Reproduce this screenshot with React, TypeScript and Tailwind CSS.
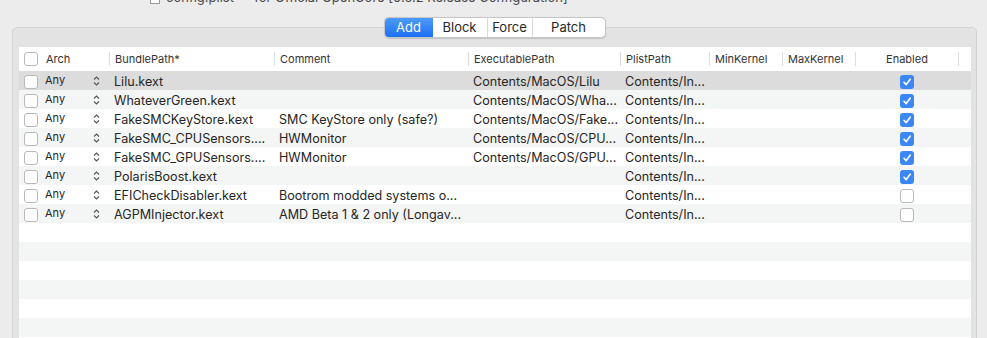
import { Fragment } from "react";

type Kext = {
  bundle: string;
  comment: string;
  exec: string;
  plist: string;
  enabled: boolean;
};

const kexts: Kext[] = [
  { bundle: "Lilu.kext", comment: "", exec: "Contents/MacOS/Lilu", plist: "Contents/In...", enabled: true },
  { bundle: "WhateverGreen.kext", comment: "", exec: "Contents/MacOS/Wha...", plist: "Contents/In...", enabled: true },
  { bundle: "FakeSMCKeyStore.kext", comment: "SMC KeyStore only (safe?)", exec: "Contents/MacOS/Fake...", plist: "Contents/In...", enabled: true },
  { bundle: "FakeSMC_CPUSensors....", comment: "HWMonitor", exec: "Contents/MacOS/CPU...", plist: "Contents/In...", enabled: true },
  { bundle: "FakeSMC_GPUSensors....", comment: "HWMonitor", exec: "Contents/MacOS/GPU...", plist: "Contents/In...", enabled: true },
  { bundle: "PolarisBoost.kext", comment: "", exec: "", plist: "Contents/In...", enabled: true },
  { bundle: "EFICheckDisabler.kext", comment: "Bootrom modded systems o...", exec: "", plist: "Contents/In...", enabled: false },
  { bundle: "AGPMInjector.kext", comment: "AMD Beta 1 & 2 only (Longav...", exec: "", plist: "Contents/In...", enabled: false },
];

const font = { fontFamily: "Inter, 'Liberation Sans', sans-serif" };

function Box({ checked }: { checked?: boolean }) {
  if (checked) {
    return (
      <span className="flex h-[14px] w-[14px] items-center justify-center rounded-[3px] bg-[#3b87f5]">
        <svg width="10" height="10" viewBox="0 0 10 10">
          <path d="M2 5.3 L4.2 7.6 L8.2 2.2" fill="none" stroke="white" strokeWidth="1.6" strokeLinecap="round" strokeLinejoin="round" />
        </svg>
      </span>
    );
  }
  return <span className="block h-[14px] w-[14px] rounded-[3px] border border-[#b9b9b9] bg-white" />;
}

function Stepper() {
  return (
    <svg width="7" height="10" viewBox="0 0 7 10" className="text-[#555]">
      <path d="M1 3.5 L3.5 1 L6 3.5 M1 6.5 L3.5 9 L6 6.5" fill="none" stroke="currentColor" strokeWidth="1.1" />
    </svg>
  );
}

const cols = "grid grid-cols-[90px_165px_194px_152px_89px_73px_73px_104px_1fr]";
const cell = "overflow-hidden whitespace-nowrap pl-[5px] pt-[3px]";

export default function App() {
  const rows = Array.from({ length: 15 }, (_, i) => kexts[i]);

  return (
    <div className="h-[338px] w-[987px] overflow-hidden bg-[#ececec] text-[#262626]" style={font}>
      <div className="-mt-[9px] flex h-[14px] items-center gap-[6px] pl-[150px] text-[13px] text-[#4a4a4a]">
        <span className="block h-[12px] w-[10px] border border-[#9a9a9a] bg-white" />
        <span className="whitespace-nowrap">config.plist — for Official OpenCore [0.6.2 Release Configuration]</span>
      </div>

      <div className="ml-[12px] mt-[22px] flex h-[400px] w-[965px] flex-col rounded-[5px] border border-[#d3d3d3] bg-[#e3e3e3]">
        <div className="-mt-[11px] flex h-[21px] self-center overflow-hidden rounded-[5px] border border-[#c6c6c6] bg-white text-[13px] shadow-[0_0.5px_1px_rgba(0,0,0,0.15)]">
          <span className="flex w-[48px] items-center justify-center bg-gradient-to-b from-[#4c9bf8] to-[#1b6ff0] text-white">Add</span>
          <span className="flex w-[55px] items-center justify-center border-r border-[#dadada]">Block</span>
          <span className="flex w-[45px] items-center justify-center border-r border-[#dadada]">Force</span>
          <span className="flex w-[72px] items-center justify-center">Patch</span>
        </div>

        <div className="ml-[6px] mt-[9px] w-[952px] bg-white">
          <div className={`${cols} h-[24px] items-center text-[11px] text-[#333]`}>
            <div className="flex items-center">
              <span className="ml-[5px] mr-[8px]"><Box /></span>
              <span>Arch</span>
            </div>
            {["BundlePath*", "Comment", "ExecutablePath", "PlistPath", "MinKernel", "MaxKernel"].map((h) => (
              <div key={h} className="flex h-[14px] items-center border-l border-[#dddddd] pl-[5px]">{h}</div>
            ))}
            <div className="flex h-[14px] items-center justify-center border-l border-r border-[#dddddd]">Enabled</div>
            <div />
          </div>

          {rows.map((k, i) => (
            <div
              key={i}
              className={`${cols} h-[19px] items-center text-[12.6px] ${i === 0 ? "bg-[#dcdcdc]" : i % 2 === 1 ? "bg-[#f4f5f5]" : "bg-white"}`}
            >
              {k ? (
                <Fragment>
                  <div className="flex items-center">
                    <span className="ml-[5px] mr-[7px] mt-[3px]"><Box /></span>
                    <span className="-mt-[1px] w-[48px] text-[11px]">Any</span>
                    <Stepper />
                  </div>
                  <div className={cell}>{k.bundle}</div>
                  <div className={cell}>{k.comment}</div>
                  <div className={cell}>{k.exec}</div>
                  <div className={cell}>{k.plist}</div>
                  <div />
                  <div />
                  <div className="flex justify-center pt-[2px]"><Box checked={k.enabled} /></div>
                  <div />
                </Fragment>
              ) : null}
            </div>
          ))}
        </div>
      </div>
    </div>
  );
}
